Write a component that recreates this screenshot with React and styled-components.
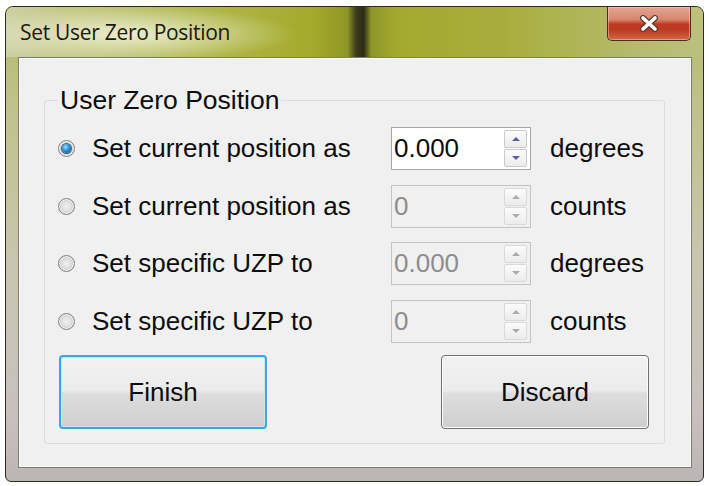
import React from "react";
import styled, { createGlobalStyle } from "styled-components";

const Global = createGlobalStyle`
  html, body {
    margin: 0;
    padding: 0;
    background: #ffffff;
  }
  body {
    width: 709px;
    height: 486px;
    overflow: hidden;
  }
`;

// outer aero frame
const Window = styled.div`
  box-sizing: border-box;
  margin: 6px 0 0 5px;
  width: 699px;
  height: 476px;
  border: 1px solid #2b2b22;
  border-radius: 8px 8px 6px 6px;
  display: flex;
  flex-direction: column;
  overflow: hidden;
  background: linear-gradient(
    180deg,
    #b4b866 0%,
    #bfc28a 20%,
    #c8c6b0 55%,
    #c9c0bf 85%,
    #bdb5b4 100%
  );
`;

const TitleBar = styled.div`
  height: 50px;
  flex: none;
  display: flex;
  align-items: flex-start;
  padding-left: 14px;
  background:
    radial-gradient(ellipse 170px 28px at 120px 27px, rgba(238, 240, 212, 0.95), rgba(238, 240, 212, 0) 100%),
    linear-gradient(
      90deg,
      #cdd0a4 0%,
      #c3c785 8%,
      #b1b74d 28%,
      #a3ab2b 44%,
      #8f9626 49%,
      #3d3d1f 50.2%,
      #2c2c19 51.3%,
      #8e9528 52.4%,
      #a2aa2e 56%,
      #a8ae3e 72%,
      #b5ba6c 90%,
      #bcc07e 100%
    );
`;

const Title = styled.span`
  font-family: "Open Sans", "Noto Sans", sans-serif;
  font-size: 21px;
  color: #1a1a12;
  line-height: 50px;
  letter-spacing: -0.3px;
`;

const CloseButton = styled.div`
  margin-left: auto;
  margin-right: 12px;
  width: 84px;
  height: 34px;
  box-sizing: border-box;
  border: 1px solid #4e2a20;
  border-top: none;
  border-radius: 0 0 5px 5px;
  display: flex;
  align-items: center;
  justify-content: center;
  background: linear-gradient(
    180deg,
    #e2a594 0%,
    #d78670 38%,
    #c0391f 52%,
    #bb3b22 70%,
    #cf6a46 100%
  );
  box-shadow: inset 0 0 0 1px rgba(255, 220, 200, 0.45);
`;

const Client = styled.div`
  flex: 1;
  margin: 0 11px 13px 12px;
  border: 1px solid #7b7d70;
  background: #f0f0f0;
  box-shadow: inset 0 0 0 1px #fbfbfb;
  padding: 27px 26px 23px 25px;
  display: flex;
  flex-direction: column;
`;

const Group = styled.fieldset`
  flex: 1;
  min-width: 0;
  margin: 0;
  border: 1px solid #d8dde0;
  border-radius: 3px;
  padding: 0 15px 13px 13px;
  display: flex;
  flex-direction: column;
`;

const Legend = styled.legend`
  padding: 0 2px;
  font-family: "Liberation Sans", Arial, sans-serif;
  font-size: 26.5px;
  line-height: 30px;
  color: #0d0d0d;
`;

const Options = styled.div`
  margin-top: 12px;
  display: grid;
  grid-template-columns: 314px 140px auto;
  grid-auto-rows: 43px;
  column-gap: 19px;
  row-gap: 14.5px;
  align-items: center;
`;

const Option = styled.label`
  display: flex;
  align-items: center;
  gap: 17px;
  font-family: "Liberation Sans", Arial, sans-serif;
  font-size: 26px;
  color: #0d0d0d;
`;

const Radio = styled.span`
  width: 17px;
  height: 17px;
  flex: none;
  box-sizing: border-box;
  border-radius: 50%;
  border: 1px solid #7f7f7f;
  background: radial-gradient(circle at 50% 50%, #f2f2f2 0%, #dedede 45%, #b0b0b0 100%);
  box-shadow: inset 0 0 0 1px #f4f4f4;
  display: flex;
  align-items: center;
  justify-content: center;

  &::after {
    content: "";
    display: ${(p) => (p.$checked ? "block" : "none")};
    width: 9px;
    height: 9px;
    border-radius: 50%;
    background: radial-gradient(circle at 40% 35%, #a6e0ff 0%, #2b8ed4 45%, #0b4b86 100%);
    box-shadow: 0 0 0 1px #355f82;
  }
`;

const SpinBox = styled.div`
  box-sizing: border-box;
  height: 43px;
  border: 1px solid ${(p) => (p.$disabled ? "#c3c3c3" : "#a6a6a6")};
  background: ${(p) => (p.$disabled ? "#f0f0f0" : "#ffffff")};
  display: flex;
  align-items: center;
  padding: 2px 3px 2px 2px;
`;

const SpinValue = styled.span`
  flex: 1;
  font-family: "Liberation Sans", Arial, sans-serif;
  font-size: 26px;
  color: ${(p) => (p.$disabled ? "#8d8d8d" : "#0d0d0d")};
`;

const Spinner = styled.div`
  width: 23px;
  height: 100%;
  display: flex;
  flex-direction: column;
  gap: 1px;
`;

const SpinButton = styled.div`
  flex: 1;
  box-sizing: border-box;
  border: 1px solid ${(p) => (p.$disabled ? "#d9d9d9" : "#cacaca")};
  border-radius: 2px;
  background: linear-gradient(180deg, #fbfbfb 0%, #ececec 100%);
  display: flex;
  align-items: center;
  justify-content: center;

  &::after {
    content: "";
    width: 0;
    height: 0;
    border-left: 4px solid transparent;
    border-right: 4px solid transparent;
    ${(p) =>
      p.$up
        ? `border-bottom: 4px solid ${p.$disabled ? "#ababab" : "#5c5ca6"};`
        : `border-top: 4px solid ${p.$disabled ? "#ababab" : "#5c5ca6"};`}
  }
`;

const Unit = styled.span`
  font-family: "Liberation Sans", Arial, sans-serif;
  font-size: 26px;
  color: #0d0d0d;
`;

const Buttons = styled.div`
  margin-top: 12.5px;
  display: flex;
  justify-content: space-between;
  padding-left: 1px;
`;

const Button = styled.button`
  width: 208px;
  height: 74px;
  box-sizing: border-box;
  border-radius: 4px;
  border: ${(p) => (p.$focused ? "2px solid #3ca6de" : "1px solid #707070")};
  background: linear-gradient(
    180deg,
    #f2f2f2 0%,
    #ebebeb 48%,
    #dddddd 52%,
    #cfcfcf 100%
  );
  box-shadow: inset 0 0 0 1px ${(p) => (p.$focused ? "#c4e6f6" : "#fbfbfb")};
  font-family: "Liberation Sans", Arial, sans-serif;
  font-size: 26px;
  color: #0d0d0d;
  padding: 0;
`;

const rows = [
  { label: "Set current position as", value: "0.000", unit: "degrees", active: true },
  { label: "Set current position as", value: "0", unit: "counts" },
  { label: "Set specific UZP to", value: "0.000", unit: "degrees" },
  { label: "Set specific UZP to", value: "0", unit: "counts" },
];

const CloseIcon = () => (
  <svg width="20" height="17" viewBox="0 0 20 17">
    <path d="M4 3 L16 14 M16 3 L4 14" stroke="#5a3a34" strokeWidth="6" strokeLinecap="round" />
    <path d="M4 3 L16 14 M16 3 L4 14" stroke="#ffffff" strokeWidth="3.6" strokeLinecap="round" />
  </svg>
);

export default function App() {
  return (
    <>
      <Global />
      <Window>
        <TitleBar>
          <Title>Set User Zero Position</Title>
          <CloseButton>
            <CloseIcon />
          </CloseButton>
        </TitleBar>
        <Client>
          <Group>
            <Legend>User Zero Position</Legend>
            <Options>
              {rows.map((r, i) => (
                <React.Fragment key={i}>
                  <Option>
                    <Radio $checked={r.active} />
                    {r.label}
                  </Option>
                  <SpinBox $disabled={!r.active}>
                    <SpinValue $disabled={!r.active}>{r.value}</SpinValue>
                    <Spinner>
                      <SpinButton $up $disabled={!r.active} />
                      <SpinButton $disabled={!r.active} />
                    </Spinner>
                  </SpinBox>
                  <Unit>{r.unit}</Unit>
                </React.Fragment>
              ))}
            </Options>
            <Buttons>
              <Button $focused>Finish</Button>
              <Button>Discard</Button>
            </Buttons>
          </Group>
        </Client>
      </Window>
    </>
  );
}
